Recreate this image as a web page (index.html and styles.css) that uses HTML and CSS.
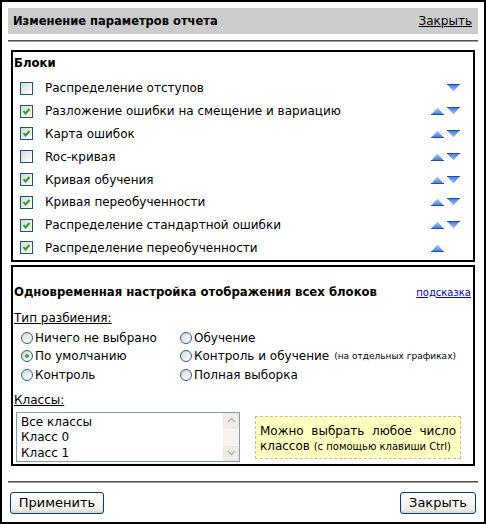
FILE: index.html
```html
<!DOCTYPE html>
<html lang="ru">
<head>
    <meta charset="UTF-8">
    <meta name="viewport" content="width=device-width, initial-scale=1.0">
    <title>Изменение параметров отчета</title>
    <link rel="stylesheet" href="styles.css">
</head>
<body>
<div class="dialog">
    <div class="head">
        <span class="head-title">Изменение параметров отчета</span>
        <a class="head-close" href="#">Закрыть</a>
    </div>
    <div class="rule"></div>

    <!-- Blocks list -->
    <div class="panel blocks">
        <div class="panel-title">Блоки</div>
        <ul class="block-list">
            <li class="block-row">
                <span class="cb"></span>
                <span class="block-name">Распределение отступов</span>
                <span class="order"><span class="slot"></span><span class="slot down"></span></span>
            </li>
            <li class="block-row">
                <span class="cb checked"></span>
                <span class="block-name">Разложение ошибки на смещение и вариацию</span>
                <span class="order"><span class="slot up"></span><span class="slot down"></span></span>
            </li>
            <li class="block-row">
                <span class="cb checked"></span>
                <span class="block-name">Карта ошибок</span>
                <span class="order"><span class="slot up"></span><span class="slot down"></span></span>
            </li>
            <li class="block-row">
                <span class="cb"></span>
                <span class="block-name">Roc-кривая</span>
                <span class="order"><span class="slot up"></span><span class="slot down"></span></span>
            </li>
            <li class="block-row">
                <span class="cb checked"></span>
                <span class="block-name">Кривая обучения</span>
                <span class="order"><span class="slot up"></span><span class="slot down"></span></span>
            </li>
            <li class="block-row">
                <span class="cb checked"></span>
                <span class="block-name">Кривая переобученности</span>
                <span class="order"><span class="slot up"></span><span class="slot down"></span></span>
            </li>
            <li class="block-row">
                <span class="cb checked"></span>
                <span class="block-name">Распределение стандартной ошибки</span>
                <span class="order"><span class="slot up"></span><span class="slot down"></span></span>
            </li>
            <li class="block-row">
                <span class="cb checked"></span>
                <span class="block-name">Распределение переобученности</span>
                <span class="order"><span class="slot up"></span><span class="slot"></span></span>
            </li>
        </ul>
    </div>

    <!-- Display settings for all blocks -->
    <div class="panel display">
        <div class="display-head">
            <span class="panel-title">Одновременная настройка отображения всех блоков</span>
            <a class="hint" href="#">подсказка</a>
        </div>
        <div class="field-label">Тип разбиения:</div>
        <div class="radio-grid">
            <label class="radio-item"><span class="rb"></span>Ничего не выбрано</label>
            <label class="radio-item"><span class="rb"></span>Обучение</label>
            <label class="radio-item"><span class="rb on"></span>По умолчанию</label>
            <label class="radio-item"><span class="rb"></span>Контроль и обучение <small class="aside">(на отдельных графиках)</small></label>
            <label class="radio-item"><span class="rb"></span>Контроль</label>
            <label class="radio-item"><span class="rb"></span>Полная выборка</label>
        </div>
        <div class="field-label classes-label">Классы:</div>
        <div class="classes">
            <div class="listbox">
                <ul class="list-items">
                    <li>Все классы</li>
                    <li>Класс 0</li>
                    <li>Класс 1</li>
                </ul>
                <div class="scroll">
                    <span class="scroll-btn">
                        <svg width="9" height="6" viewBox="0 0 9 6"><path d="M1 5 L4.5 1.5 L8 5" fill="none" stroke="#b8b8b0" stroke-width="1.6"/></svg>
                    </span>
                    <span class="scroll-track"></span>
                    <span class="scroll-btn">
                        <svg width="9" height="6" viewBox="0 0 9 6"><path d="M1 1 L4.5 4.5 L8 1" fill="none" stroke="#b8b8b0" stroke-width="1.6"/></svg>
                    </span>
                </div>
            </div>
            <div class="note">
                <div class="note-line">Можно выбрать любое число</div>
                <div class="note-line2">классов <small class="note-small">(с помощью клавиши Ctrl)</small></div>
            </div>
        </div>
    </div>

    <div class="rule rule-bottom"></div>
    <div class="actions">
        <button class="btn btn-apply">Применить</button>
        <button class="btn btn-close">Закрыть</button>
    </div>
</div>

<svg width="0" height="0" class="defs">
    <defs>
        <linearGradient id="gUp" x1="0" y1="0" x2="0" y2="1">
            <stop offset="0" stop-color="#b5d2f7"/>
            <stop offset="1" stop-color="#3a72d6"/>
        </linearGradient>
        <linearGradient id="gDown" x1="0" y1="0" x2="0" y2="1">
            <stop offset="0" stop-color="#3a72d6"/>
            <stop offset="1" stop-color="#a8c8f5"/>
        </linearGradient>
    </defs>
</svg>

<script>
    // Fill arrow slots and checkboxes with their little svg pictures
    var upSvg = '<svg width="13" height="8" viewBox="0 0 13 8"><polygon points="0,8 6.5,0.5 13,8" fill="url(#gUp)"/><line x1="0" y1="7.5" x2="13" y2="7.5" stroke="#1d4fb8"/></svg>';
    var downSvg = '<svg width="13" height="8" viewBox="0 0 13 8"><polygon points="0,0 13,0 6.5,7.5" fill="url(#gDown)"/><line x1="0" y1="0.5" x2="13" y2="0.5" stroke="#1d4fb8"/></svg>';
    var checkSvg = '<svg width="11" height="11" viewBox="0 0 11 11"><path d="M2.5 5 L4.5 7.5 L8.5 3" fill="none" stroke="#21a121" stroke-width="2"/></svg>';

    document.querySelectorAll('.slot.up').forEach(function (el) { el.innerHTML = upSvg; });
    document.querySelectorAll('.slot.down').forEach(function (el) { el.innerHTML = downSvg; });
    document.querySelectorAll('.cb.checked').forEach(function (el) { el.innerHTML = checkSvg; });
</script>
</body>
</html>
```

FILE: styles.css
```css
html, body {
    margin: 0;
    padding: 0;
    background: #fff;
}
body {
    font-family: "DejaVu Sans", Verdana, sans-serif;
    font-size: 12px;
    color: #000;
}
.defs {
    position: absolute;
}
.dialog {
    width: 486px;
    height: 524px;
    box-sizing: border-box;
    border: 2px solid #000;
    padding: 6px;
}
.head {
    height: 26px;
    background: #cccccc;
    display: flex;
    align-items: center;
    justify-content: space-between;
    padding: 0 6px 0 5px;
}
.head-title {
    font-weight: bold;
    font-size: 11.5px;
}
.head-close {
    color: #000;
    font-size: 12px;
}
.rule {
    margin-top: 6px;
    height: 0;
    border-top: 1px solid #505050;
    border-bottom: 1px solid #a0a0a0;
}
.panel {
    margin: 8px 3px 0;
    border: 2px solid #000;
}
.panel-title {
    font-weight: bold;
    font-size: 11.7px;
    line-height: 16px;
}
.blocks {
    padding: 3px 13px 1px 1px;
}
.block-list {
    list-style: none;
    margin: 6px 0 0;
    padding: 0;
}
.block-row {
    height: 22.8px;
    display: flex;
    align-items: center;
    padding-left: 6px;
}
.block-name {
    flex: 1;
    margin-left: 12px;
}
.cb {
    width: 11px;
    height: 11px;
    border: 1px solid #1c5180;
    background: linear-gradient(135deg, #d8d8d2, #fff);
    display: flex;
    align-items: center;
    justify-content: center;
}
.order {
    display: flex;
    gap: 3px;
}
.slot {
    width: 13px;
    height: 8px;
    display: block;
}
.slot svg {
    display: block;
}
.display {
    margin-top: 3px;
    padding: 17px 2px 2px 1px;
}
.display-head {
    display: flex;
    justify-content: space-between;
    align-items: center;
}
.hint {
    color: #0000cc;
    font-size: 10px;
}
.field-label {
    margin-top: 10px;
    text-decoration: underline;
    line-height: 16px;
}
.radio-grid {
    display: grid;
    grid-template-columns: 159px 1fr;
    margin-top: 2px;
    padding-left: 7px;
}
.radio-item {
    height: 18.5px;
    display: flex;
    align-items: center;
    gap: 2px;
}
.rb {
    width: 10px;
    height: 10px;
    border: 1px solid #2c5d98;
    border-radius: 50%;
    background: linear-gradient(135deg, #d8d8d2, #fff);
    display: flex;
    align-items: center;
    justify-content: center;
}
.rb.on::after {
    content: "";
    width: 4px;
    height: 4px;
    border-radius: 50%;
    background: #2fb02f;
}
.aside {
    font-size: 9px;
    margin-left: 3px;
}
.classes-label {
    margin-top: 8px;
}
.classes {
    display: flex;
    align-items: flex-start;
    gap: 15px;
    margin-top: 4px;
    padding-left: 2px;
}
.listbox {
    width: 224px;
    height: 50px;
    box-sizing: border-box;
    border: 1px solid #7f9db9;
    display: flex;
}
.list-items {
    flex: 1;
    list-style: none;
    margin: 0;
    padding: 2px 0 0 4px;
    line-height: 15.5px;
}
.scroll {
    width: 16px;
    display: flex;
    flex-direction: column;
    background: #f4f3ee;
}
.scroll-btn {
    height: 15px;
    box-sizing: border-box;
    border: 1px solid #e8e8e2;
    border-radius: 2px;
    background: #eeede6;
    display: flex;
    align-items: center;
    justify-content: center;
}
.scroll-track {
    flex: 1;
}
.note {
    width: 206px;
    height: 43px;
    box-sizing: border-box;
    margin-top: 4px;
    padding: 7px 4px 0;
    border: 1px dashed #bdbdbd;
    background: #ffffc0;
    line-height: 15px;
}
.note-line {
    text-align: justify;
    text-align-last: justify;
}
.note-small {
    font-size: 10px;
}
.rule-bottom {
    margin-top: 15px;
}
.actions {
    display: flex;
    justify-content: space-between;
    margin-top: 9px;
    padding: 0 2px;
}
.btn {
    height: 22px;
    font-family: "DejaVu Sans", Verdana, sans-serif;
    font-size: 13px;
    color: #000;
    border: 1px solid #003c74;
    border-radius: 3px;
    background: linear-gradient(#ffffff, #f0efea 80%, #d8d4ca);
    padding: 0;
}
.btn-apply {
    width: 94px;
}
.btn-close {
    width: 76px;
}
```
